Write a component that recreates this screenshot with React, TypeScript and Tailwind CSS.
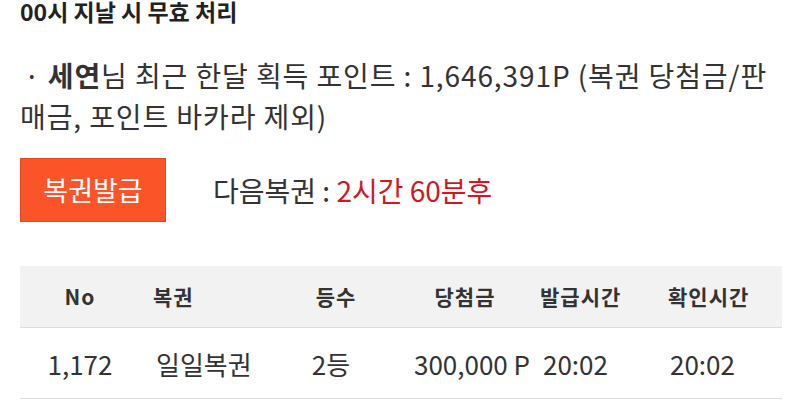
import React from "react";

const font = { fontFamily: '"Noto Sans CJK KR", "Noto Sans", sans-serif' };

export default function App() {
  return (
    <div className="w-[800px] h-[410px] overflow-hidden bg-white text-[#333]" style={font}>
      <div className="pl-[20px] pr-[18px]">
        <div className="-mt-[4px] h-[30px] text-[23px] leading-[30px] font-bold text-[#222] whitespace-nowrap">00시 지날 시 무효 처리</div>
        <div className="mt-[29px] text-[28px] leading-[41px] tracking-[0.9px] text-[#333]">
          <span className="pl-[4px]">· </span>
          <b className="font-bold">세연</b>님 최근 한달 획득 포인트 : 1,646,391P (복권 당첨금/판매금, 포인트 바카라 제외)
        </div>
        <div className="mt-[21px] flex items-center">
          <button className="w-[146px] h-[64px] bg-[#fb5428] border border-[#e04a20] text-white text-[27px] flex items-center justify-center">
            복권발급
          </button>
          <div className="ml-[47px] text-[28px] text-[#333]">
            다음복권 : <span className="text-[#d4161f]">2시간 60분후</span>
          </div>
        </div>
        <div className="mt-[44px] w-[762px]">
          <div className="grid grid-cols-[120px_150px_100px_150px_128px_1fr] h-[62px] items-center bg-[#f2f2f2] border-b border-[#dcdcdc] text-[21px] tracking-[1px] font-bold text-[#333]">
            <div className="text-center">No</div>
            <div className="pl-[13px]">복권</div>
            <div className="text-center pr-[8px]">등수</div>
            <div className="text-center">당첨금</div>
            <div className="">발급시간</div>
            <div className="">확인시간</div>
          </div>
          <div className="grid grid-cols-[120px_150px_100px_150px_128px_1fr] h-[71px] items-center border-b border-[#dcdcdc] text-[26px] text-[#333]">
            <div className="text-center">1,172</div>
            <div className="pl-[16px]">일일복권</div>
            <div className="text-center pr-[18px]">2등</div>
            <div className="text-center pl-[14px] whitespace-nowrap">300,000 P</div>
            <div className="pl-[3px]">20:02</div>
            <div className="pl-[2px]">20:02</div>
          </div>
        </div>
      </div>
    </div>
  );
}
